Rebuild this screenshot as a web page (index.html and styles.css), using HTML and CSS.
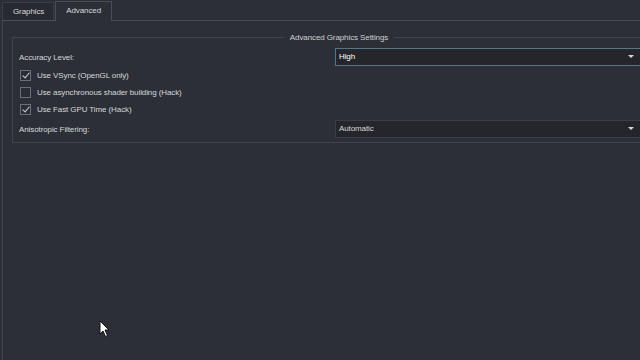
FILE: index.html
```html
<!DOCTYPE html>
<html lang="en">
<head>
  <meta charset="UTF-8" />
  <title>Advanced Graphics Settings</title>
  <link rel="stylesheet" href="styles.css">
</head>
<body>
  <div class="window">
    <!-- Tabs -->
    <div class="tabs">
      <div class="tab">Graphics</div>
      <div class="tab active">Advanced</div>
    </div>

    <div class="pane">
      <fieldset class="group">
        <legend>Advanced Graphics Settings</legend>

        <div class="row">
          <span class="label">Accuracy Level:</span>
          <div class="combo focused">High<span class="arrow"></span></div>
        </div>

        <label class="check"><span class="box checked"></span>Use VSync (OpenGL only)</label>
        <label class="check"><span class="box"></span>Use asynchronous shader building (Hack)</label>
        <label class="check"><span class="box checked"></span>Use Fast GPU Time (Hack)</label>

        <div class="row">
          <span class="label">Anisotropic Filtering:</span>
          <div class="combo">Automatic<span class="arrow"></span></div>
        </div>
      </fieldset>
    </div>
  </div>

  <svg class="cursor" width="12" height="18" viewBox="0 0 12 18">
    <path d="M1 1 L1 14 L4 11 L6.5 16.5 L8.5 15.5 L6 10 L10 10 Z" fill="#ffffff" stroke="#111" stroke-width="1"/>
  </svg>
</body>
</html>
```

FILE: styles.css
```css
body {
  margin: 0;
  width: 640px;
  height: 360px;
  overflow: hidden;
  background-color: #2c2f37;
  font-family: "Liberation Sans", Arial, sans-serif;
  font-size: 8px;
  letter-spacing: -0.1px;
  color: #d6d7da;
  position: relative;
}
.window {
  width: 640px;
  height: 360px;
  overflow: hidden;
}
.tabs {
  display: flex;
  padding: 2px 0 0 2px;
  height: 18px;
  gap: 1px;
}
.tab {
  padding: 0 9px 0 10px;
  height: 17px;
  line-height: 17px;
  border: 1px solid #3a3d46;
  border-bottom: none;
  background-color: #272a31;
}
.tab.active {
  height: 19px;
  margin-top: -1px;
  padding: 0 10px;
  border-color: #4a4e57;
  background-color: #2c2f37;
  position: relative;
  z-index: 1;
}
.pane {
  margin-left: 2px;
  border-top: 1px solid #4a4e57;
  border-left: 1px solid #40444c;
  height: 340px;
  padding: 12px 0 0 9px;
}
.group {
  margin: 0;
  width: 640px;
  border: 1px solid #40444c;
  padding: 6px 0 4px 6px;
}
.group legend {
  margin: 0 auto;
  padding: 0 6px;
  color: #cfd0d4;
}
.row {
  display: grid;
  grid-template-columns: 316px 1fr;
  align-items: center;
  height: 18px;
}
.combo {
  position: relative;
  height: 16px;
  line-height: 16px;
  padding-left: 3px;
  width: 306px;
  background-color: #24262c;
  border: 1px solid #3a3e46;
}
.combo.focused {
  border-color: #56768a;
  color: #ffffff;
}
.arrow {
  position: absolute;
  right: 11px;
  top: 6px;
  border-left: 3px solid transparent;
  border-right: 3px solid transparent;
  border-top: 3px solid #d8d8d8;
}
.check {
  display: flex;
  align-items: center;
  height: 17px;
  gap: 6px;
  margin-left: 1px;
}
.check:first-of-type {
  margin-top: 1px;
}
.box {
  width: 9px;
  height: 9px;
  border: 1px solid #6b6f78;
  background-color: #2a2d34;
  position: relative;
}
.box.checked::after {
  content: "";
  position: absolute;
  left: 3px;
  top: 0px;
  width: 3px;
  height: 6px;
  border-right: 1.5px solid #cfd1d6;
  border-bottom: 1.5px solid #cfd1d6;
  transform: rotate(40deg);
}
.row:last-child {
  margin-top: 2px;
}
.cursor {
  position: absolute;
  left: 99px;
  top: 320px;
}
```
